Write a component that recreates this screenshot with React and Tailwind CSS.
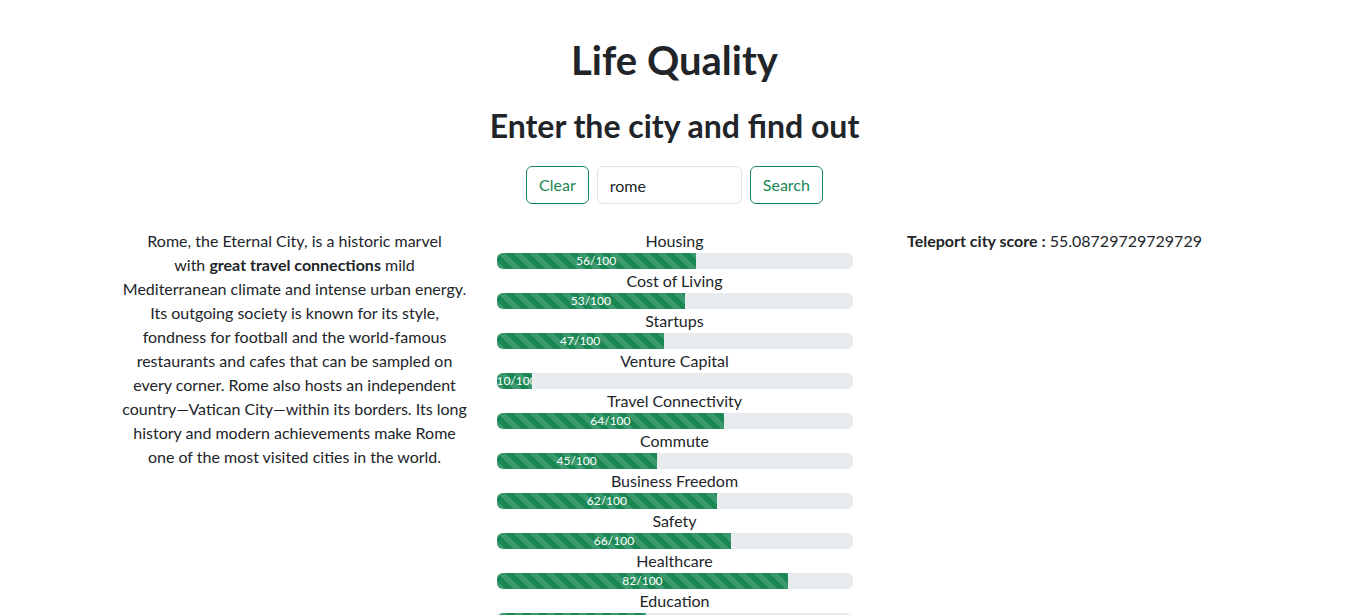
import { useState } from 'react';

const scores = [
  { name: 'Housing', value: 56 },
  { name: 'Cost of Living', value: 53 },
  { name: 'Startups', value: 47 },
  { name: 'Venture Capital', value: 10 },
  { name: 'Travel Connectivity', value: 64 },
  { name: 'Commute', value: 45 },
  { name: 'Business Freedom', value: 62 },
  { name: 'Safety', value: 66 },
  { name: 'Healthcare', value: 82 },
  { name: 'Education', value: 42 },
  { name: 'Environmental Quality', value: 68 },
  { name: 'Economy', value: 39 },
];

function ScoreBar({ name, value }) {
  return (
    <div>
      <div className="leading-6">{name}</div>
      <div className="h-4 w-full bg-[#e9ecef] rounded-[6px] overflow-hidden flex">
        <div
          className="h-full bg-[#198754] bg-[linear-gradient(45deg,rgba(255,255,255,.15)_25%,transparent_25%,transparent_50%,rgba(255,255,255,.15)_50%,rgba(255,255,255,.15)_75%,transparent_75%,transparent)] bg-size-[16px_16px] text-white text-[12px] leading-4 text-center whitespace-nowrap overflow-hidden flex flex-col justify-center"
          style={{ width: `${value}%` }}
        >
          {value}/100
        </div>
      </div>
    </div>
  );
}

export default function App() {
  const [city, setCity] = useState('rome');

  return (
    <div className="min-h-screen bg-white text-[#212529] font-['Lato','Noto_Sans',sans-serif] text-base">
      <div className="max-w-[1140px] mx-auto px-3 pt-[36px] text-center">
        <h1 className="text-[40px] leading-[48px] font-bold">Life Quality</h1>
        <h2 className="text-[32px] leading-[38px] font-bold mt-[23px]">Enter the city and find out</h2>

        <form
          onSubmit={(e) => e.preventDefault()}
          className="flex justify-center items-center gap-2 mt-[21px]"
        >
          <button
            type="button"
            onClick={() => setCity('')}
            className="h-[38px] px-3 border border-[#198754] text-[#198754] rounded-[6px] hover:bg-[#198754] hover:text-white"
          >
            Clear
          </button>
          <input
            type="text"
            value={city}
            onChange={(e) => setCity(e.target.value)}
            className="h-[38px] w-[145px] px-3 border border-[#dee2e6] rounded-[6px] outline-none"
          />
          <button
            type="submit"
            className="h-[38px] px-3 border border-[#198754] text-[#198754] rounded-[6px] hover:bg-[#198754] hover:text-white"
          >
            Search
          </button>
        </form>

        <div className="grid grid-cols-3 gap-6 mt-[25px]">
          <p className="leading-6 whitespace-nowrap">
            Rome, the Eternal City, is a historic marvel<br />
            with <b>great travel connections</b> mild<br />
            Mediterranean climate and intense urban energy.<br />
            Its outgoing society is known for its style,<br />
            fondness for football and the world-famous<br />
            restaurants and cafes that can be sampled on<br />
            every corner. Rome also hosts an independent<br />
            country—Vatican City—within its borders. Its long<br />
            history and modern achievements make Rome<br />
            one of the most visited cities in the world.
          </p>

          <div className="flex flex-col">
            {scores.map((s) => (
              <ScoreBar key={s.name} name={s.name} value={s.value} />
            ))}
          </div>

          <div className="leading-6">
            <b>Teleport city score :</b> 55.08729729729729
          </div>
        </div>
      </div>
    </div>
  );
}
